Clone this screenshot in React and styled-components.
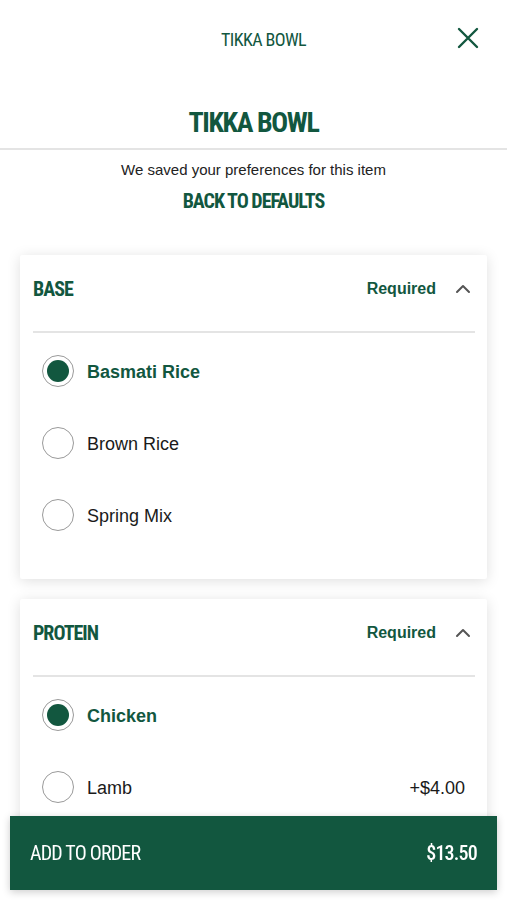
import React from 'react';
import styled, { createGlobalStyle } from 'styled-components';

const GREEN = '#12573f';
const CONDENSED = '"Roboto Condensed", Roboto, "Liberation Sans", sans-serif';

const Global = createGlobalStyle`
  html, body {
    margin: 0;
    padding: 0;
    background: #fff;
    font-family: "Liberation Sans", Arial, sans-serif;
    color: #222;
  }
  * { box-sizing: border-box; }
`;

const groups = [
  {
    title: 'BASE',
    options: [
      { name: 'Basmati Rice', selected: true },
      { name: 'Brown Rice' },
      { name: 'Spring Mix' },
    ],
  },
  {
    title: 'PROTEIN',
    options: [
      { name: 'Chicken', selected: true },
      { name: 'Lamb', price: '+$4.00' },
    ],
  },
];

export default function App() {
  return (
    <Page>
      <Global />
      <TopBar>
        <TopTitle>TIKKA BOWL</TopTitle>
        <CloseButton aria-label="Close">
          <svg width="22" height="22" viewBox="0 0 22 22" fill="none" stroke={GREEN} strokeWidth="2.4" strokeLinecap="round">
            <path d="M2 2 L20 20 M20 2 L2 20" />
          </svg>
        </CloseButton>
      </TopBar>

      <TitleBlock>
        <Title>TIKKA BOWL</Title>
      </TitleBlock>

      <Notice>We saved your preferences for this item</Notice>
      <ResetLink>BACK TO DEFAULTS</ResetLink>

      <Groups>
        {groups.map((group) => (
          <Card key={group.title}>
            <CardHeader>
              <GroupTitle>{group.title}</GroupTitle>
              <HeaderRight>
                <Required>Required</Required>
                <svg width="16" height="10" viewBox="0 0 16 10" fill="none" stroke="#555" strokeWidth="2" strokeLinecap="round" strokeLinejoin="round">
                  <path d="M2 8 L8 2 L14 8" />
                </svg>
              </HeaderRight>
            </CardHeader>
            <Divider />
            <OptionList>
              {group.options.map((opt) => (
                <Option key={opt.name}>
                  <Radio $checked={opt.selected} />
                  <OptionName $checked={opt.selected}>{opt.name}</OptionName>
                  {opt.price && <Price>{opt.price}</Price>}
                </Option>
              ))}
            </OptionList>
          </Card>
        ))}
      </Groups>

      <OrderBar>
        <span>ADD TO ORDER</span>
        <Total>$13.50</Total>
      </OrderBar>
    </Page>
  );
}

const Page = styled.div`
  width: 100%;
  padding-bottom: 60px;
`;

const TopBar = styled.header`
  position: relative;
  height: 78px;
  display: flex;
  align-items: center;
  justify-content: center;
`;

const TopTitle = styled.div`
  font-family: ${CONDENSED};
  font-stretch: 75%;
  font-size: 18px;
  font-weight: 400;
  letter-spacing: -0.6px;
  color: ${GREEN};
  margin-left: 20px;
`;

const CloseButton = styled.button`
  position: absolute;
  right: 28px;
  top: 27px;
  border: 0;
  background: none;
  padding: 0;
  display: flex;
`;

const TitleBlock = styled.div`
  padding: 28px 0 8px;
  border-bottom: 2px solid #e4e4e4;
  text-align: center;
`;

const Title = styled.h1`
  margin: 0;
  font-family: ${CONDENSED};
  font-stretch: 75%;
  font-weight: 700;
  font-size: 28px;
  line-height: 34px;
  letter-spacing: -1.4px;
  color: ${GREEN};
`;

const Notice = styled.p`
  margin: 10px 0 0;
  text-align: center;
  font-size: 15px;
  line-height: 20px;
  color: #222;
`;

const ResetLink = styled.div`
  margin-top: 9px;
  text-align: center;
  font-family: ${CONDENSED};
  font-stretch: 75%;
  font-weight: 700;
  font-size: 20px;
  line-height: 24px;
  letter-spacing: -1px;
  color: ${GREEN};
`;

const Groups = styled.div`
  margin-top: 42px;
  padding: 0 20px;
  display: flex;
  flex-direction: column;
  gap: 20px;
`;

const Card = styled.section`
  background: #fff;
  border-radius: 2px;
  box-shadow: 0 2px 14px rgba(0, 0, 0, 0.13);
  padding: 0 12px 28px 13px;
`;

const CardHeader = styled.div`
  height: 68px;
  display: flex;
  align-items: center;
  justify-content: space-between;
`;

const GroupTitle = styled.h2`
  margin: 0;
  font-family: ${CONDENSED};
  font-stretch: 75%;
  font-weight: 700;
  font-size: 20px;
  letter-spacing: -1px;
  color: ${GREEN};
`;

const HeaderRight = styled.div`
  display: flex;
  align-items: center;
  gap: 19px;
  padding-right: 4px;
`;

const Required = styled.span`
  font-size: 16px;
  font-weight: 700;
  color: ${GREEN};
`;

const Divider = styled.div`
  height: 2px;
  margin-top: 8px;
  background: #e4e4e4;
`;

const OptionList = styled.div`
  padding: 2px 10px 0 9px;
`;

const Option = styled.label`
  height: 72px;
  display: flex;
  align-items: center;
  gap: 13px;
`;

const Radio = styled.span`
  width: 32px;
  height: 32px;
  border-radius: 50%;
  border: 1.5px solid #9a9a9a;
  flex: none;
  display: flex;
  align-items: center;
  justify-content: center;
  &::after {
    content: '';
    width: 22px;
    height: 22px;
    border-radius: 50%;
    background: ${(p) => (p.$checked ? GREEN : 'transparent')};
  }
`;

const OptionName = styled.span`
  flex: 1;
  font-size: 18px;
  font-weight: ${(p) => (p.$checked ? 700 : 400)};
  color: ${(p) => (p.$checked ? GREEN : '#1a1a1a')};
  padding-top: 3px;
`;

const Price = styled.span`
  font-size: 18px;
  color: #1a1a1a;
  padding-top: 3px;
`;

const OrderBar = styled.button`
  position: fixed;
  left: 10px;
  right: 10px;
  bottom: 10px;
  height: 74px;
  border: 0;
  background: ${GREEN};
  color: #fff;
  display: flex;
  align-items: center;
  justify-content: space-between;
  padding: 0 20px;
  font-family: ${CONDENSED};
  font-stretch: 75%;
  font-weight: 400;
  font-size: 20px;
  letter-spacing: -0.8px;
  box-shadow: 0 2px 8px rgba(0, 0, 0, 0.2);
`;

const Total = styled.span`
  font-weight: 500;
`;
